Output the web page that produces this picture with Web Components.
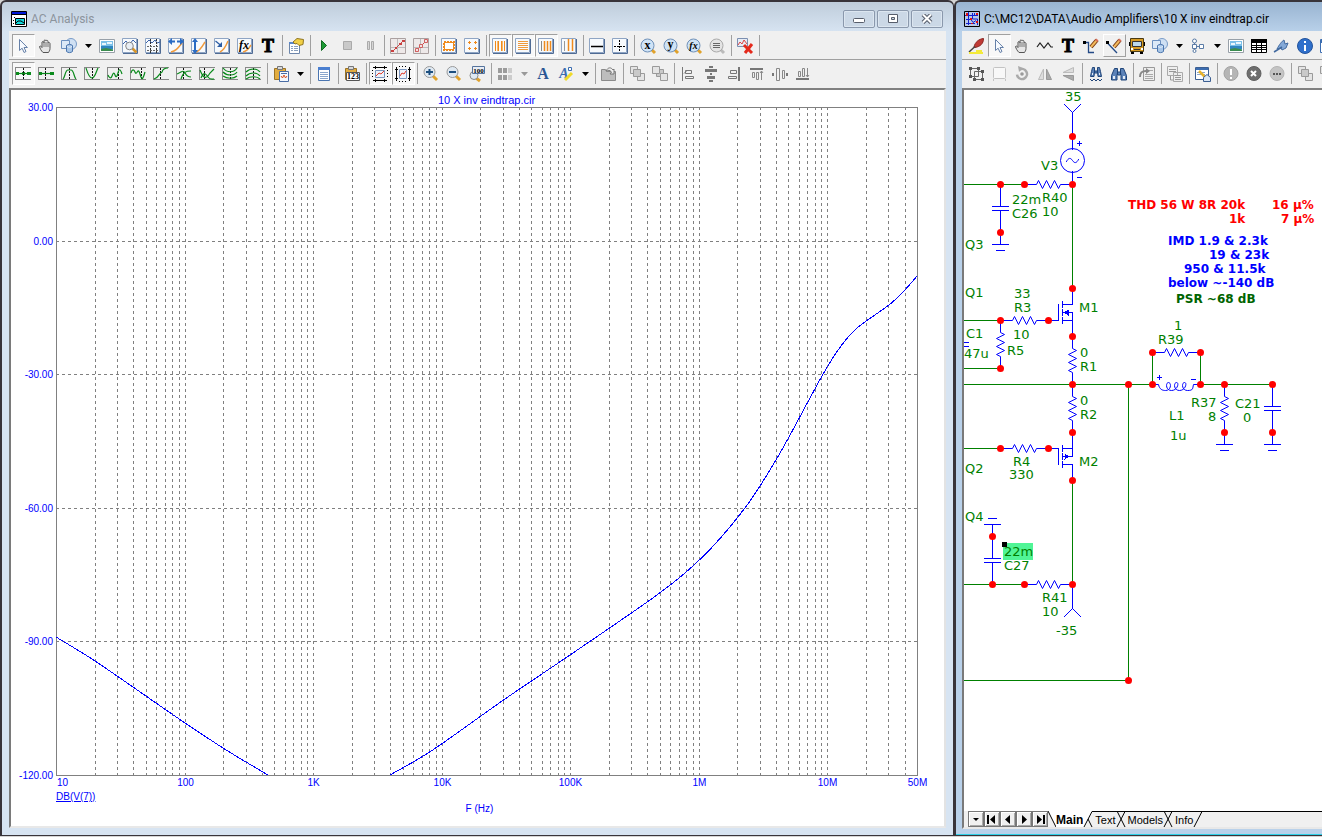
<!DOCTYPE html>
<html lang="en">
<head>
<meta charset="utf-8">
<title>Micro-Cap 12</title>
<style>
	body {
		margin: 0;
		height: 100vh;
		box-sizing: border-box;
		padding-bottom: 1px;
		display: grid;
		grid-template-columns: 954fr 368fr;
		grid-template-rows: minmax(0, 1fr);
		overflow: hidden;
		background: #d4d4d4;
		font-family: Roboto, "Open Sans", sans-serif;
	}
</style>
</head>
<body>
	<mc-window heading="AC Analysis" icon="analysis" inactive>
		<mc-toolbar slot="tools" label="Analysis" items="select* hand shapes v image zoomgraph graph autox autoy tofit fx text | props | run stop pause | lin sqr | orange dots | bars* rows* cols* cols2 | hline cross | magx magy magf magn | delete |"></mc-toolbar>
		<mc-toolbar slot="tools" label="Cursor" items="c0* c1 c2 c3 c4 c5 c6 c7 c8 c9 c10 | paste v | list | numeric | hscale* vscale* | zoomin zoomout zoom100 | tiles vd font color v | open | front back | al ac ar at am ab"></mc-toolbar>
		<mc-plot heading="10 X inv eindtrap.cir" trace="DB(V(7))" unit="F (Hz)"></mc-plot>
	</mc-window>
	<mc-window heading="C:\MC12\DATA\Audio Amplifiers\10 X inv eindtrap.cir" icon="circuit">
		<mc-toolbar slot="tools" label="Drawing" items="quill select* hand wave text ortho diag^ bus shapes v flow v image table link info window"></mc-toolbar>
		<mc-toolbar slot="tools" label="Editing" items="group box rotate flipx flipy | find2 find | redo | copyto | editpage | bang cross2 more | front back"></mc-toolbar>
		<mc-schematic></mc-schematic>
		<mc-tabs slot="footer">
			<button>Main</button>
			<button>Text</button>
			<button>Models</button>
			<button>Info</button>
		</mc-tabs>
	</mc-window>

<script>
/* ---------- icons, all on a 16 x 16 grid ---------- */

const page = '<path fill="#f7fafd" stroke="#8fa5c4" d="M.5 .5h14v14H.5z"/><path fill="none" stroke="#4f6b94" d="M15.500 1v14.500H1"/>';
const axes = '<path fill="none" stroke="#888" d="M.5 1v13M1 1.500h15M1 13.500h15"/>';
const mark = (x, y = 2) => `<path stroke="#111" stroke-dasharray="2 1" d="M${x} ${y}v11"/>`;
const curve = d => `<path fill="none" stroke="#0a8a1c" stroke-width="1.200" d="${d}"/>`;
const lens = (body, rim = '#6f90b8', fill = '#cfe3f6', handle = '#e0a22c') =>
	`<path stroke="${handle}" stroke-width="3" d="M11 11l4 4"/><circle cx="7.500" cy="7.500" r="6.500" fill="${fill}" stroke="${rim}"/>${body}`;
const glyph = (t, x, y, size, extra = '') =>
	`<text x="${x}" y="${y}" font-size="${size}" text-anchor="middle" font-family="Liberation Serif, serif" ${extra}>${t}</text>`;
const square = (x, y, s, a = '#e4e4e4', b = '#9a9a9a') => `<path fill="${a}" stroke="${b}" d="M${x}.5 ${y}.5h${s}v${s}h-${s}z"/>`;
const clip = '<path fill="#e2ac3e" stroke="#9a7327" d="M1.500 2.500h11v11h-11z"/><path fill="#d9d9d9" stroke="#777" d="M4.500 .5h5v3h-5z"/>';
const pencil = '<path stroke="#7b3b12" stroke-width="4" d="M8 9l6-7"/><path stroke="#f2b95c" stroke-width="2" d="M8 9l6-7"/><path stroke="#d8705c" stroke-width="3" d="M13 3l1.500-1.500"/>';

const ICONS = {
	analysis: '<path fill="#fff" stroke="#000" d="M.5 .5h15v15H.5z"/><path fill="#0018d8" d="M1 1h14v2H1z"/><path stroke="#000" d="M1 3.500h14"/><path fill="#12dbe0" stroke="#000" d="M4.500 7.500h9v6h-9z"/><path fill="none" stroke="#000" d="M5 12l2-2h3l3 2M3 6.500h1M2 9.500h1M2 12.500h1"/>',
	circuit: '<path fill="#b9c8e6" stroke="#000" d="M.5 .5h15v15H.5z"/><path fill="none" stroke="#1020d0" d="M1 4.500h13M4.500 1v13M8.500 2v6h5v6M2 8.500h5l2 3 3-2M10.500 2v3M2 12.500h9"/><path fill="#d11" d="M2 2h2v3H2zM12 2h2v2h-2zM6 7h2v2H6zM12 10h2v2h-2zM7 12h2v1H7z"/>',
	select: '<path fill="#f8fbff" stroke="#6580a8" d="M4.500 1.500v11l2.600-2.300 2 4.300 1.900-1-2-4h3.400z"/>',
	hand: '<path fill="#e6e6e6" stroke="#555" d="M5 14.500c-2-2-3-4-3.500-6 1-1 2 0 2.500 1V4c1-1 2 0 2 1V2.500c1-1 2 0 2 .5 0-1 2-1 2 .5v1.500c.5-1 2-.5 2 .5v5c0 2-1 3-1.500 4z"/><path stroke="#777" d="M6 5v4M8 4v5M10 5v4"/>',
	shapes: '<circle cx="10" cy="6" r="5.500" fill="#cfe0f3" stroke="#7a9cc8"/><path fill="#dce9f7" stroke="#6c90c0" d="M.5 2.500h8v8h-8z"/><path fill="#a9c7e8" stroke="#4d76ae" d="M5.500 7.500c2-1.500 4-1.500 6 0v6c-2 1.500-4 1.500-6 0z"/><path fill="none" stroke="#eef5fc" d="M6 8.500c2 1 3 1 5 0"/>',
	image: '<path fill="#fff" stroke="#98a0a8" d="M.5 1.500h15v13H.5z"/><path fill="#7cc0e8" d="M2 3h12v10H2z"/><path fill="#2f86c0" d="M2 8h12v3H2z"/><path fill="#3b8c4e" d="M2 11l5-1 7 1.500V13H2z"/><path fill="#e8f6fd" d="M3 5h4v2H3zM8 4h5v2H8z"/>',
	zoomgraph: page + '<path fill="none" stroke="#3b62a8" d="M1 6l3-3 3 4 4-5 3 3"/><path stroke="#d8962a" stroke-width="2.500" d="M10 10l4.500 4.500"/><circle cx="7.500" cy="8" r="3.800" fill="#e8eef5" stroke="#888"/>',
	graph: page + '<path fill="none" stroke="#3b62a8" d="M1 5l3-3 3 3 3-3 2 3 3-1"/><path stroke="#333" stroke-dasharray="2 1" d="M5.500 1v14M11.500 1v14"/><path stroke="#666" stroke-dasharray="2 1" d="M2 8.500h12M2 12.500h12"/>',
	autox: page + '<path fill="none" stroke="#f09a3c" stroke-width="1.500" d="M3 14c5-1 7-4 11-9"/><path fill="#2b6cc4" d="M0 3.500L4 0v2.500h3v2H4V7zM16 3.500L12 0v2.500H9v2h3V7z"/>',
	autoy: page + '<path fill="none" stroke="#f09a3c" stroke-width="1.500" d="M5 14c4-1 6-5 9-10"/><path fill="#2b6cc4" d="M4 0l3 4H5v8h2l-3 4-3-4h2V4H1z"/>',
	tofit: page + '<path fill="none" stroke="#f09a3c" stroke-width="1.500" d="M6 14c4-2 6-6 8-11"/><path stroke="#2b5ca4" stroke-width="1.300" d="M1.500 3L7 7.500"/><path fill="#2b5ca4" d="M8 4v5H3z"/>',
	fx: page + '<path fill="none" stroke="#f09a3c" stroke-width="1.500" d="M6 14c5-1 6-4 8-7"/>' + glyph('fx', 7, 11, 12, 'font-style="italic" font-weight="bold"'),
	text: glyph('T', 8, 14, 18, 'font-weight="bold" stroke="#000"'),
	props: '<path fill="#fff" stroke="#6d86ab" d="M1.500 5.500h10v10h-10z"/><path fill="#5a86c8" d="M1 4h11v2H1z"/><path stroke="#8aa0bd" d="M3 8.500h2M6 8.500h4M3 10.500h2M6 10.500h4M3 12.500h2M6 12.500h4"/><path fill="#f1cf45" stroke="#8f7420" d="M5 4l4-3.500 6.500 1-.5 5-4 1-2-2-2 .5z"/>',
	run: '<path fill="#1e9a35" stroke="#116a22" d="M5.500 2.500l5 5-5 5z"/>',
	stop: '<path fill="#c9c9c9" stroke="#aaa" d="M4.500 3.500h8v8h-8z"/>',
	pause: '<path fill="#d6d6d6" stroke="#aaa" d="M5.500 3.500h2v8h-2zM9.500 3.500h2v8h-2z"/>',
	lin: '<path fill="#eee9e9" stroke="#aaa0a0" d="M.5 .5h15v15H.5z"/><path stroke="#bbb" d="M7.500 1v14M1 9.500h14"/><path stroke="#c94848" d="M2 14L14 2"/><path fill="#c94040" d="M1 12h3v2H1zM5 9h2v2H5zM9 5h3v2H9zM12 2h3v2h-3z"/>',
	sqr: '<path fill="#eee9e9" stroke="#aaa0a0" d="M.5 .5h15v15H.5z"/><path stroke="#bbb" d="M7.500 1v14M1 9.500h14"/><path stroke="#c94848" d="M2 14L14 2"/><path fill="#f3e4e4" stroke="#d06060" d="M2.500 10.500h3v3h-3zM6.500 6.500h3v3h-3zM11.500 1.500h3v3h-3z"/>',
	orange: page + '<path fill="#fff" stroke="#ef8a1d" stroke-width="2" stroke-dasharray="2 1" d="M3 4h10v8H3z"/><path fill="none" stroke="#ef8a1d" d="M3.500 4.500h9v7h-9z"/>',
	dots: page + '<path stroke="#ef8a1d" d="M4 4.500h3M5.500 3v3M10 4.500h3M11.500 3v3M4 10.500h3M5.500 9v3M10 10.500h3M11.500 9v3"/>',
	bars: page + '<path stroke="#ef8a1d" d="M3.500 3v10M6.500 3v10M9.500 3v10M12.500 3v10"/><path stroke="#f6b76a" d="M5.500 3v10M10.500 3v10"/>',
	rows: page + '<path stroke="#ef9a3d" d="M3 3.500h10M3 5.500h10M3 7.500h10M3 9.500h10M3 11.500h10"/>',
	cols: page + '<path stroke="#888" d="M3.500 3v10"/><path stroke="#ef8a1d" stroke-width="1.500" d="M6.500 3v10M9.500 3v10M12.500 3v10"/>',
	cols2: page + '<path stroke="#999" d="M3.500 3v10"/><path stroke="#ef8a1d" stroke-width="1.500" d="M7.500 1v12M11.500 1v12"/>',
	hline: page + '<path stroke="#000" stroke-width="1.500" d="M2 8.500h12"/>',
	cross: page + '<path stroke="#000" stroke-dasharray="2 1" d="M7.500 2v12M2 8.500h12"/>',
	magx: lens(glyph('x', 7.5, 11, 12, 'font-weight="bold"')),
	magy: lens(glyph('y', 7.5, 10, 12, 'font-weight="bold"')),
	magf: lens(glyph('fx', 7.5, 11, 10, 'font-style="italic" font-weight="bold"')),
	magn: lens('<path stroke="#666" d="M4 5.500h7M4 7.500h7M4 9.500h7"/>', '#aaa', '#e4e4e4', '#bbb'),
	delete: '<path fill="#e6ecf5" stroke="#7c8fb0" d="M.5 .5h10v8H.5z"/><path fill="none" stroke="#d44" d="M1 7l2-3 2 2 2-4 3 4"/><path stroke="#e42a1c" stroke-width="3" d="M7 7l8 8M15 6l-7 9"/>',
	c0: axes + '<path fill="#0a8a1c" d="M1 6h3v3H1zM12 6h4v3h-4zM7 6h3v3H7z"/>' + curve('M3 7.500h10') + mark(8.5),
	c1: axes + '<path fill="#0a8a1c" d="M1 6h3v3H1zM12 6h4v3h-4z"/>' + curve('M3 7.500h10') + mark(7.5),
	c2: axes + mark(8.5) + curve('M2 13c2-1 2-9 5-9h3c3 0 3 8 5 9'),
	c3: axes + mark(8.5) + curve('M2 2c1 3 3 10 6 10s4-6 6-10'),
	c4: axes + mark(11.5) + curve('M1 9c1 3 3 4 4 1s2-4 3-1 2 2 3-2 2-5 4 1'),
	c5: axes + mark(11.5) + curve('M1 7c1-4 3-4 4-1s2 0 3-1 2 3 3 6 2 2 4-5'),
	c6: axes + mark(7.5) + curve('M1 13c5-1 4-5 8-7 1-4 4-4 6-4'),
	c7: axes + mark(7.5) + curve('M1 8c4-1 6-5 8-1s4 4 6 4M5 13c2-7 5-8 10-8'),
	c8: axes + mark(5.5) + curve('M1 4c3 8 6 10 10 3l4-4M2 12c3-7 5-4 7-1s4 2 6 2'),
	c9: axes + mark(8.5) + curve('M1 2c4 5 11 5 14 0M1 6c4 4 11 4 14 0M1 10c4 3 11 3 14 0'),
	c10: axes + mark(8.5) + curve('M1 6c4-4 11-4 14 0M1 10c4-4 11-4 14 0M1 13c4-3 11-3 14 0'),
	paste: clip + '<path fill="#f4f8fd" stroke="#4a6da5" d="M6.500 5.500h9v10h-9z"/><path fill="none" stroke="#d85020" d="M8 10l1.500 2 1.500-3 1.500 3 1.500-2"/><path stroke="#4a6da5" d="M8 7.500h6"/>',
	list: '<path fill="#fff" stroke="#4a75b0" d="M2.500 1.500h11v13h-11z"/><path fill="#4a7fd0" d="M2 1h12v3H2z"/><path stroke="#8aa6cc" d="M4 6.500h8M4 8.500h8M4 10.500h8M4 12.500h8"/>',
	numeric: clip + '<path fill="#fff" stroke="#555" d="M2.500 6.500h13v8h-13z"/>' + glyph('123', 9, 13, 8, 'font-weight="bold"'),
	hscale: '<path fill="#eef3fa" stroke="#7a96c0" d="M3.500 4.500h9v7h-9z"/><path fill="none" stroke="#e03a2a" d="M4 10l3-3 2 1 3-3"/><path stroke="#000" d="M1 1.500h14M1 14.500h14M3.500 0v3M12.500 0v3M3.500 13v3M12.500 13v3"/><path stroke="#000" stroke-dasharray="1 2" d="M.5 4v9M15.500 4v9"/>',
	vscale: '<path fill="#eef3fa" stroke="#7a96c0" d="M4.500 3.500h7v9h-7z"/><path fill="none" stroke="#e03a2a" d="M5 10l2-3 2 1 2-3"/><path stroke="#000" d="M1.500 1v14M14.500 1v14M0 3.500h3M0 12.500h3M13 3.500h3M13 12.500h3"/><path stroke="#000" stroke-dasharray="1 2" d="M4 .5h9M4 15.500h9"/>',
	zoomin: '<path stroke="#e0a22c" stroke-width="3" d="M10 10l4 4"/><circle cx="6.500" cy="6" r="5.500" fill="#dfe9f2" stroke="#999"/><path stroke="#1c4f80" stroke-width="2" d="M3 6h7M6.500 3v6"/>',
	zoomout: '<path stroke="#e0a22c" stroke-width="3" d="M10 10l4 4"/><circle cx="6.500" cy="6" r="5.500" fill="#dfe9f2" stroke="#999"/><path stroke="#1c4f80" stroke-width="2" d="M3 6h7"/>',
	zoom100: '<path stroke="#e0a22c" stroke-width="3" d="M7 12l4 3"/><circle cx="5" cy="9.500" r="4" fill="#dfe9f2" stroke="#888"/><path fill="#e9eef6" stroke="#55739c" d="M3.500 .5h12v7h-12z"/>' + glyph('100', 9.5, 7, 7, 'font-weight="bold"'),
	tiles: '<path fill="#9b9b9b" d="M1 2h4v5H1zM6 2h4v5H6zM1 9h4v5H1zM6 9h4v5H6z"/><path fill="#ccc" d="M11 2h4v5h-4zM11 9h4v5h-4z"/>',
	font: glyph('A', 8, 13, 16, 'font-weight="bold" fill="#2b5694"'),
	color: glyph('A', 6, 12, 14, 'font-weight="bold" font-style="italic" fill="#3c6db0"') + '<path stroke="#f0da28" stroke-width="3" d="M7 14l7-7"/><path fill="#fff" stroke="#3c6db0" d="M10.500 1.500h3v3h-3z"/>',
	open: '<path fill="#bdbdbd" stroke="#8a8a8a" d="M.5 3.500h4l1 2h9v9H.5z"/><path fill="#eee" stroke="#777" d="M5 5c2-4 5-4 7-1l1-1v5H9l1.500-2C9 4 7 4 5 5z"/>',
	front: square(1, 0, 7) + square(8, 7, 7) + square(4, 3, 7, '#c9c9c9'),
	back: square(4, 3, 7, '#c9c9c9') + square(0, 0, 7) + square(8, 7, 7),
	al: '<path fill="none" stroke="#777" d="M2.500 1v14M5.500 4.500h6v3h-6zM5.500 10.500h8v2h-8zM4 7.500l3-3"/>',
	ac: '<path fill="#777" d="M6 0h4v2H6zM2 3h12v3H2zM7 7h2v2H7zM4 10h8v3H4zM6 14h4v2H6z"/>',
	ar: '<path fill="none" stroke="#777" d="M4.500 4.500h6v3h-6zM2.500 10.500h8v2h-8z"/><path fill="#777" d="M12 1h2v14h-2z"/>',
	at: '<path fill="#777" d="M1 2h13v2H1z"/><path fill="none" stroke="#888" d="M3.500 6.500h2v5h-2zM7.500 6.500h2v7h-2zM12.500 5v9M11 7l1.500-2L14 7"/>',
	am: '<path fill="#777" d="M0 7h2v3H0zM14 7h2v3h-2z"/><path fill="none" stroke="#888" d="M4.500 2.500h3v12h-3zM10.500 4.500h2v8h-2z"/>',
	ab: '<path fill="#777" d="M1 12h13v2H1z"/><path fill="none" stroke="#888" d="M3.500 5.500h2v5h-2zM7.500 2.500h2v8h-2zM12.500 2v9M11 9l1.500 2 1.500-2"/>',
	quill: '<path fill="#c03a35" stroke="#8b2723" d="M6 9c1-5 5-8 9.500-8.500 0 5-3 8-8.500 9z"/><path stroke="#444" stroke-width="1.500" d="M1 14l6-5.500"/><path stroke="#f3ea3a" stroke-width="2" d="M1 15h14M8 13h6"/>',
	wave: '<path fill="none" stroke="#222" stroke-width="1.200" d="M0 9l3-4 4 5 4-5 3 4h2"/>',
	ortho: '<path fill="none" stroke="#234a86" stroke-width="1.300" d="M1 4.500h4.500v10H11"/>' + pencil + '<path d="M0 3h3v3H0z"/>',
	diag: '<path fill="none" stroke="#234a86" stroke-width="1.300" d="M1 4.500l10 10.500"/>' + pencil + '<path d="M0 3h3v3H0z"/>',
	bus: '<path fill="#d79b22" stroke="#4a3a14" d="M1.500 .5h13v13h-13z"/><path fill="#bcd8ea" stroke="#333" d="M3.500 3.500h9v5h-9z"/><path d="M0 4h1v4H0zM15 4h1v4h-1zM2 14h3v2H2zM11 14h3v2h-3z"/><path stroke="#333" d="M5 11.500h6"/><path fill="#fff" d="M2 10h2v2H2zM12 10h2v2h-2z"/>',
	flow: '<path fill="none" stroke="#5a7ba6" d="M4.500 4v8M5 8.500h4"/><circle cx="4.500" cy="3" r="2" fill="#fff" stroke="#5a7ba6"/><path fill="#fff" stroke="#5a7ba6" d="M2.500 6.500h4v4h-4zM9.500 6.500h4v4h-4z"/><circle cx="4.500" cy="13" r="1.500" fill="#fff" stroke="#5a7ba6"/>',
	table: '<path fill="#fff" stroke="#000" d="M.5 1.500h15v13H.5z"/><path d="M0 1h16v4H0z"/><path fill="none" stroke="#000" d="M1 7.500h14M1 9.500h14M1 11.500h14M5.500 5v9M10.500 5v9"/>',
	link: '<path fill="#84a9d8" stroke="#41699f" d="M3 11c2-4 5-8 7-9l1 4 3-1-2 5-4 2-1-2z"/><path stroke="#41699f" stroke-width="1.500" d="M0 14l8-5"/>',
	info: '<circle cx="8" cy="8" r="7.500" fill="#2f6fcb" stroke="#24549c"/><path fill="#fff" d="M7 3h2v2H7zM7 7h2v6H7z"/>',
	window: '<path fill="#fff" stroke="#3c6db0" d="M.5 1.500h15v13H.5z"/><path fill="#3c6db0" d="M1 2h14v3H1z"/>',
	group: '<path fill="none" stroke="#666" d="M2.500 2.500h8v8h-8zM6.500 5.500h8v8h-8z"/><path fill="#555" d="M1 1h3v3H1zM9 1h3v3H9zM1 9h3v3H1zM5 12h3v3H5zM13 12h3v3h-3zM13 4h3v3h-3z"/>',
	box: '<rect x="2.500" y="1.500" width="12" height="11" rx="1" fill="#f8f8f8" stroke="#c3c3c3"/><path stroke="#c3c3c3" d="M2.500 13v2M14.500 13v2"/>',
	rotate: '<circle cx="8" cy="8" r="5" fill="none" stroke="#aaa" stroke-width="2.500" stroke-dasharray="25 6" transform="rotate(-120 8 8)"/><path fill="#aaa" d="M4 0l1 6 4-4z"/><circle cx="8" cy="8" r="1.800" fill="#999"/>',
	flipx: '<path fill="#ddd" stroke="#bbb" d="M1.500 13.500h5V3z"/><path fill="#aaa" stroke="#999" d="M9.500 3v10.500h5z"/>',
	flipy: '<path fill="#ddd" stroke="#bbb" d="M13.500 1.500v5H3z"/><path fill="#aaa" stroke="#999" d="M13.500 14.500v-5H3z"/>',
	find2: '<path fill="#5b82b8" stroke="#1f4478" d="M4.500 1.500h2v4l-.5 5H2.500l1-5zM9.500 1.500h2l1 4 1 5H10l-.5-5zM6.500 5h3v2h-3z"/><path fill="#e4ecf6" d="M4 7h1v2H4zM11 7h1v2h-1z"/><path fill="none" stroke="#1f4478" d="M2 13l2 2 2-2 2 2 2-2 2 2 2-2"/>',
	find: '<path fill="#5b82b8" stroke="#1f4478" d="M3.500 2.500h3v4l-.5 3v4.500H.5V9.500zM9.500 2.500h3l3 7v4.500H10V9.500l-.5-3zM6.500 6h3v3h-3z"/><path fill="#e4ecf6" d="M2 10h2v3H2zM12 10h2v3h-2z"/>',
	redo: '<path fill="#eee" stroke="#999" d="M4.500 1.500h11v13h-11z"/><path stroke="#aaa" d="M6 8.500h8M6 10.500h8M6 12.500h8M9 4.500h5"/><path fill="none" stroke="#888" stroke-width="2" d="M1 11c0-5 2-6 6-6"/><path fill="#888" d="M7 2l4 3-4 3z"/>',
	copyto: '<path fill="#eee" stroke="#aaa" d="M.5 .5h10v9H.5zM6.500 6.500h9v9h-9z"/><path fill="none" stroke="#999" d="M2 3.500h7M2 5.500h7M8 9.500h6M8 11.500h6M8 13.500h6M3.500 10v4H6"/>',
	editpage: '<path fill="#fff" stroke="#3c5f92" d="M.5 1.500h13v12H.5z"/><path fill="#3c6db0" d="M1 2h12v2H1z"/><path stroke="#8aa6cc" d="M2 6.500h8M2 8.500h8"/><path stroke="#e8b32c" stroke-width="2.500" d="M4 5l6 6"/><path fill="#dce7f4" stroke="#3c5f92" d="M8.500 15.500v-4l3.500-3 3.500 3v4z"/>',
	bang: '<circle cx="8" cy="7.500" r="7" fill="#b5b5b5" stroke="#a2a2a2"/><path fill="#fff" d="M7 3h2v6H7zM7 11h2v2H7z"/>',
	cross2: '<circle cx="8" cy="7.500" r="7" fill="#6e6e6e" stroke="#606060"/><path stroke="#fff" stroke-width="2" d="M5 5l5 5M10 5l-5 5"/>',
	more: '<circle cx="8" cy="7.500" r="7" fill="#c4c4c4" stroke="#b4b4b4"/><path fill="#555" d="M4 7h2v2H4zM7 7h2v2H7zM10 7h2v2h-2z"/>',
};

const svgIcon = name => `<svg width="16" height="16" viewBox="0 0 16 16" aria-hidden="true">${ICONS[name]}</svg>`;

/**
 * A single tool button.
 * @attribute icon     key of ICONS
 * @attribute pressed  sunken look
 * @attribute raised   raised look
 */
class McTool extends HTMLElement {
	constructor() {
		super();
		this.attachShadow({mode: 'open'});
	}

	connectedCallback() {
		this.shadowRoot.innerHTML = `
			<style>
			:host {
				display: block;
				flex: none;
			}

			button {
				box-sizing: border-box;
				display: block;
				width: 23px;
				height: 23px;
				padding: 2px;
				border: 1px solid transparent;
				background: none;
			}

			:host([pressed]) button {
				background: #f8f8f8;
				border-color: #a0a0a0 #fff #fff #a0a0a0;
			}

			:host([raised]) button {
				border-color: #fff #a0a0a0 #a0a0a0 #fff;
			}

			svg { display: block; overflow: visible; }
			</style>
			<button type="button" aria-label="${this.getAttribute('icon')}" aria-pressed="${this.hasAttribute('pressed')}">${svgIcon(this.getAttribute('icon'))}</button>
		`;
	}
}

/**
 * One row of tools.
 * @attribute items  names separated by blanks; "*" pressed, "^" raised,
 *                   "|" separator, "v" menu arrow, "vd" disabled menu arrow
 */
class McToolbar extends HTMLElement {
	constructor() {
		super();
		this.attachShadow({mode: 'open'});
	}

	connectedCallback() {
		const items = this.getAttribute('items').split(' ').map(item => this.item(item)).join('');
		this.shadowRoot.innerHTML = `
			<style>
			:host {
				display: flex;
				padding: 2px 3px;
				overflow: hidden;
			}

			i {
				flex: none;
				width: 1px;
				margin: 1px 2px;
				background: #a0a0a0;
			}

			.menu {
				flex: none;
				width: 15px;
				padding: 0;
				border: 0;
				background: none;
			}

			.menu svg { display: block; margin: auto; }
			</style>
			${items}
		`;
		this.setAttribute('role', 'toolbar');
		this.setAttribute('aria-label', this.getAttribute('label'));
	}

	item(text) {
		if (text === '|') return '<i></i>';
		if (text === 'v' || text === 'vd') {
			const fill = text === 'v' ? '#000' : '#999';
			return `<button class="menu" type="button" aria-label="menu"><svg width="7" height="4"><path fill="${fill}" d="M0 0h7L3.500 4z"/></svg></button>`;
		}
		const state = text.endsWith('*') ? 'pressed' : text.endsWith('^') ? 'raised' : '';
		return `<mc-tool icon="${text.replace(/[*^]/, '')}" ${state}></mc-tool>`;
	}
}

/**
 * MDI child window with title bar, tools, body and footer.
 * @attribute inactive  greyed title and visible caption buttons
 */
class McWindow extends HTMLElement {
	constructor() {
		super();
		this.attachShadow({mode: 'open'});
	}

	connectedCallback() {
		const caption = `
			<nav>
				<button aria-label="Minimize"><svg width="14" height="10"><rect x="1.500" y="4.500" width="11" height="4" rx="1" fill="#fff" stroke="#565d6b"/></svg></button>
				<button aria-label="Restore"><svg width="14" height="10"><path fill="#fff" stroke="#565d6b" d="M2.500 .5h9v8h-9z"/><path fill="#cbd6e2" stroke="#565d6b" d="M5.500 3.500h3v2h-3z"/></svg></button>
				<button aria-label="Close"><svg width="14" height="10"><path stroke="#565d6b" stroke-width="4" d="M3 .5l8 8M11 .5l-8 8"/><path stroke="#fff" stroke-width="2" d="M3 .5l8 8M11 .5l-8 8"/></svg></button>
			</nav>`;
		this.shadowRoot.innerHTML = `
			<style>
			:host {
				--frame: #b9d1ea;
				display: flex;
				flex-direction: column;
				box-sizing: border-box;
				min-width: 0;
				border: 2px solid #38343a;
				border-width: 2px 0 1px 2px;
				border-radius: 6px 0 0 0;
				padding: 0 0 6px 6px;
				background: linear-gradient(#99b4d1, var(--frame) 30px);
				box-shadow: inset 0 -1px #2fd0e6;
			}

			:host([inactive]) {
				--frame: #d7e4f2;
				border-width: 2px 1px 1px 2px;
				border-radius: 6px 6px 0 0;
				padding: 0 7px 7px 7px;
				background: linear-gradient(#bfcddb, var(--frame) 30px);
				box-shadow: none;
			}

			header {
				display: flex;
				align-items: center;
				gap: 4px;
				box-sizing: border-box;
				height: 29px;
				padding: 5px 3px 0 2px;
			}

			h1 {
				flex: 1;
				margin: 0;
				font-size: 12px;
				line-height: 18px;
				font-weight: normal;
				white-space: nowrap;
				overflow: hidden;
			}

			:host([inactive]) h1 { color: #8c949d; }

			nav {
				display: flex;
				gap: 2px;
			}

			nav button {
				display: grid;
				place-items: center;
				width: 32px;
				height: 18px;
				padding: 0;
				border: 1px solid #8a98ac;
				border-radius: 2px;
				background: #cbd8e6;
				box-shadow: inset 0 0 0 1px #dce6f0;
			}

			.tools {
				padding-top: 1px;
				background: #f0f0f0;
			}

			::slotted(mc-toolbar:first-of-type) { border-bottom: 1px solid #a0a0a0; }
			::slotted(mc-toolbar:nth-of-type(2)) { padding-bottom: 3px; }

			main {
				flex: 1;
				min-height: 0;
				display: flex;
				flex-direction: column;
				border: 2px solid #696969;
				border-color: #808080 #e3e3e3 #e8e8e8 #7a7a7a;
				background: #fff;
			}

			:host(:not([inactive])) main { border-right: 0; }
			</style>
			<header>${svgIcon(this.getAttribute('icon'))}<h1></h1>${this.hasAttribute('inactive') ? caption : ''}</header>
			<div class="tools"><slot name="tools"></slot></div>
			<main><slot></slot><slot name="footer"></slot></main>
		`;
		this.shadowRoot.querySelector('h1').textContent = this.getAttribute('heading');
	}
}

/**
 * Bode plot on a logarithmic frequency axis.
 * Redrawn whenever the element changes size.
 */
class McPlot extends HTMLElement {
	margin = {top: 17, right: 27, bottom: 51, left: 45};
	ticks = [[10, '10'], [100, '100'], [1e3, '1K'], [1e4, '10K'], [1e5, '100K'], [1e6, '1M'], [1e7, '10M'], [5e7, '50M']];
	levels = [30, 0, -30, -60, -90, -120];
	// trace samples, on a field of 861 x 668
	samples = [
		[[0, 530], [39, 554], [100, 596], [129, 616], [167, 641], [190, 655], [212, 668]],
		[[334, 668], [364, 651], [387, 636], [449, 592], [514, 548], [594, 493], [629, 466], [660, 436], [694, 394], [724, 346], [754, 291], [770, 262], [785, 239], [801, 221], [833, 198], [848, 184], [861, 169]]
	];

	constructor() {
		super();
		this.attachShadow({mode: 'open'});
		this.shadowRoot.innerHTML = `
			<style>
			:host {
				display: block;
				flex: 1;
				min-height: 0;
				overflow: hidden;
			}

			svg { display: block; }
			text { font: 10px "Liberation Sans", Arial, sans-serif; fill: #00f; }
			.heading { font-size: 11px; }
			.trace { text-decoration: underline; }
			.grid { stroke: #808080; stroke-dasharray: 3 3; shape-rendering: crispEdges; }
			.frame { fill: none; stroke: #808080; shape-rendering: crispEdges; }
			.curve { fill: none; stroke: #00f; vector-effect: non-scaling-stroke; shape-rendering: crispEdges; }
			</style>
			<svg></svg>
		`;
	}

	connectedCallback() {
		this.draw();
		new ResizeObserver(() => this.draw()).observe(this);
	}

	draw() {
		const m = this.margin;
		const width = this.clientWidth;
		const height = this.clientHeight;
		const w = width - m.left - m.right;
		const h = height - m.top - m.bottom;
		if (w < 1 || h < 1) return;

		const px = f => Math.round(m.left + w * Math.log10(f / 10) / Math.log10(5e6)) + .5;
		const py = db => Math.round(m.top + h * (30 - db) / 150) + .5;
		const bottom = m.top + h;
		let out = '';

		for (let decade = 10; decade < 5e7; decade *= 10) {
			for (let n = 1; n < 10; n++) {
				const f = decade * n;
				if (f > 10 && f < 5e7) out += `<path class="grid" d="M${px(f)} ${m.top}V${bottom}"/>`;
			}
		}
		for (const db of this.levels) {
			if (db < 30 && db > -120) out += `<path class="grid" d="M${m.left} ${py(db)}H${m.left + w}"/>`;
			out += `<text x="${m.left - 3}" y="${py(db) + 3.5}" text-anchor="end">${db.toFixed(2)}</text>`;
		}
		out += `<path class="frame" d="M${px(10)} ${py(30)}H${px(5e7)}V${py(-120)}H${px(10)}z"/>`;
		for (const [f, label] of this.ticks) {
			const x = f === 10 ? px(f) + 6 : px(f);
			out += `<text x="${x}" y="${bottom + 11}" text-anchor="middle">${label}</text>`;
		}
		out += `<svg x="${m.left}" y="${m.top}" width="${w}" height="${h}" viewBox="0 0 861 668" preserveAspectRatio="none">
			${this.samples.map(points => `<path class="curve" d="${this.smooth(points)}"/>`).join('')}
		</svg>`;
		out += `<text class="heading" x="${m.left + w / 2}" y="${m.top - 3}" text-anchor="middle">${this.getAttribute('heading')}</text>`;
		out += `<text class="trace" x="${m.left}" y="${bottom + 25}">${this.getAttribute('trace')}</text>`;
		out += `<text x="${m.left + w / 2 - 7}" y="${bottom + 37}" text-anchor="middle">${this.getAttribute('unit')}</text>`;

		const svg = this.shadowRoot.querySelector('svg');
		svg.setAttribute('width', width);
		svg.setAttribute('height', height);
		svg.innerHTML = out;
	}

	// Catmull-Rom spline through the points
	smooth(p) {
		let d = `M${p[0]}`;
		for (let i = 0; i < p.length - 1; i++) {
			const a = p[i - 1] || p[i];
			const b = p[i];
			const c = p[i + 1];
			const e = p[i + 2] || c;
			d += `C${b[0] + (c[0] - a[0]) / 6} ${b[1] + (c[1] - a[1]) / 6} ${c[0] - (e[0] - b[0]) / 6} ${c[1] - (e[1] - b[1]) / 6} ${c}`;
		}
		return d;
	}
}

/**
 * Circuit sheet. Parts sit on an 8 px grid; the sheet is scrolled by `origin`.
 */
class McSchematic extends HTMLElement {
	origin = [964, 90];
	wires = [
		'M960 184h64', 'M1072 184v104', 'M960 320h40', 'M960 368h40', 'M960 384h192', 'M960 448h40',
		'M1072 480v104', 'M960 584h64', 'M960 680h168V384', 'M1152 384v-32', 'M1200 384v-32', 'M1200 384h72'
	];
	joints = [
		[1072, 136], [1072, 184], [1000, 184], [1024, 184], [1000, 232], [1072, 288], [1000, 320], [1048, 320],
		[1072, 336], [1000, 368], [1072, 384], [1128, 384], [1152, 384], [1200, 384], [1224, 384], [1272, 384],
		[1152, 352], [1200, 352], [1224, 432], [1272, 432], [1072, 432], [1000, 448], [1048, 448], [1072, 480],
		[992, 536], [992, 584], [1024, 584], [1072, 584], [1128, 680]
	];
	// x, y, rotation
	resistors = [
		[1024, 184, 0], [1000, 320, 0], [1000, 448, 0], [1024, 584, 0], [1152, 352, 0],
		[1000, 320, 90], [1072, 336, 90], [1072, 384, 90], [1224, 384, 90]
	];
	labels = [
		[1065, 101, '35'], [1041, 170, 'V3'], [1012, 204, '22m'], [1012, 218, 'C26'], [1042, 202, 'R40'], [1042, 216, '10'],
		[965, 249, 'Q3'], [965, 297, 'Q1'], [1014, 298, '33'], [1014, 312, 'R3'], [1013, 339, '10'], [1007, 355, 'R5'],
		[966, 338, 'C1'], [964, 358, '47u'], [1079, 312, 'M1'], [1080, 357, '0'], [1080, 371, 'R1'], [1080, 405, '0'],
		[1080, 419, 'R2'], [1013, 466, 'R4'], [1009, 479, '330'], [965, 473, 'Q2'], [1079, 466, 'M2'], [965, 521, 'Q4'],
		[1004, 556, '22m'], [1004, 570, 'C27'], [1042, 602, 'R41'], [1042, 616, '10'], [1056, 635, '-35'],
		[1174, 330, '1'], [1158, 344, 'R39'], [1191, 407, 'R37'], [1208, 421, '8'], [1235, 408, 'C21'], [1243, 422, '0'],
		[1169, 420, 'L1'], [1170, 440, '1u']
	];
	notes = [
		[1128, 209, 'THD 56 W 8R 20k', '#f00'], [1272, 209, '16 µ%', '#f00'], [1229, 223, '1k', '#f00'], [1281, 223, '7 µ%', '#f00'],
		[1168, 245, 'IMD 1.9 &amp; 2.3k', '#00f'], [1209, 259, '19 &amp; 23k', '#00f'], [1184, 273, '950 &amp; 11.5k', '#00f'],
		[1168, 287, 'below ~-140 dB', '#00f'], [1176, 303, 'PSR ~68 dB', '#006400']
	];

	constructor() {
		super();
		this.attachShadow({mode: 'open'});
	}

	connectedCallback() {
		const at = (list, draw) => list.map(draw).join('');
		const [ox, oy] = this.origin;
		this.shadowRoot.innerHTML = `
			<style>
			:host {
				display: block;
				flex: 1;
				min-height: 0;
				overflow: hidden;
			}

			svg { display: block; width: 100%; height: 100%; }
			path, circle { fill: none; stroke: #00f; }
			path { stroke-linecap: square; shape-rendering: crispEdges; }
			.wire { stroke: #008000; }
			.joint { fill: #f00; stroke: none; }
			.solid { fill: #00f; stroke: none; }
			.round { shape-rendering: auto; }
			text { font: 13px "DejaVu Sans", Verdana, sans-serif; fill: #008000; }
			.note { font-size: 12px; font-weight: bold; }
			</style>
			<svg>
				<g transform="translate(${-ox} ${-oy})">
					<rect x="1003" y="543" width="30" height="17" fill="#50f596"/>
					<g transform="translate(.5 .5)">
						${at(this.wires, d => `<path class="wire" d="${d}"/>`)}
						${at(this.resistors, ([x, y, r]) => `<path class="round" transform="translate(${x} ${y}) rotate(${r})" d="M0 0h12l2-4 4 8 4-8 4 8 4-8 4 8 2-4h12"/>`)}
						<path d="M1064 104l8 8 8-8M1072 112v37M1072 171v13M1077 143h4M1079 141v4M1077 177h4"/>
						<circle cx="1072" cy="160" r="12"/>
						<path class="round" d="M1066 161c2-4 4-4 6-1s4 3 6-1"/>
						<path d="M1000 184v22M992 206h16M992 210h16M1000 210v34M992 244h16M996 250h8"/>
						<path d="M960 342h8M960 346h8"/>
						${this.mosfet(320, -1)}
						${this.mosfet(448, 1)}
						<path d="M984 524h16M988 518h8M992 524v34M984 558h16M984 562h16M992 562v22"/>
						<path d="M1072 584v24M1064 616l8-8 8 8"/>
						<path class="round" d="M1152 384h6c1 5 4 6 7 6 6 0 6-8 3-8s-3 8 3 8 8-8 5-8-3 8 3 8 8-8 5-8-3 8 3 8 5-2 6-6h7"/>
						<path d="M1157 377h4M1159 375v4M1191 379h4"/>
						<path d="M1224 432v12M1216 444h16M1220 450h8"/>
						<path d="M1272 384v22M1264 406h16M1264 410h16M1272 410v34M1264 444h16M1268 450h8"/>
						${at(this.joints, ([x, y]) => `<circle class="joint" cx="${x}" cy="${y}" r="3.500"/>`)}
					</g>
					<rect x="1002" y="542" width="5" height="5"/>
					${at(this.labels, ([x, y, t]) => `<text x="${x}" y="${y}">${t}</text>`)}
					${at(this.notes, ([x, y, t, fill]) => `<text class="note" x="${x}" y="${y}" style="fill: ${fill}">${t}</text>`)}
				</g>
			</svg>
		`;
	}

	// gate enters at height y; dir -1 has the drain on top, 1 the source on top
	mosfet(y, dir) {
		const gap = 8 * dir;
		const arrow = dir < 0 ? 'M1063 0l5-3v6z' : 'M1069 0l-5-3v6z';
		return `
			<g transform="translate(0 ${y})">
				<path d="M1048 0h10M1058 ${2 * gap}V0M1062 0h10M1062 ${gap}h10M1062 ${2 * gap}h10"/>
				<path d="M1062 -3v6M1062 ${gap - 3}v6M1062 ${2 * gap - 3}v6"/>
				<path d="${dir < 0 ? 'M1072 -16V-32M1072 -8V16' : 'M1072 16V32M1072 8V-16'}"/>
				<path class="solid" transform="translate(0 ${gap})" d="${arrow}"/>
			</g>`;
	}
}

/**
 * Sheet tabs with scroll buttons. Slotted buttons are the tabs, the first is current.
 */
class McTabs extends HTMLElement {
	constructor() {
		super();
		this.attachShadow({mode: 'open'});
	}

	connectedCallback() {
		const arrows = {
			Sheets: 'M4 6h6l-3 3z',
			First: 'M2 3h2v9H2zM10 3v9L5 7.500z',
			Previous: 'M9 3v9L4 7.500z',
			Next: 'M5 3v9l5-4.500z',
			Last: 'M4 3v9l5-4.500zM10 3h2v9h-2z'
		};
		const tabs = [...this.children];
		tabs.forEach((tab, i) => tab.slot = `tab${i}`);
		const edge = i => {
			if (i === 0) return '<path fill="#fff" d="M0 0l8 16V0z"/><path d="M0 0l8 16"/>';
			if (i === 1) return '<path fill="#fff" d="M0 0h9L2 16H0z"/><path d="M9 .5L1 16M5 8l4 8M9 .5h3"/>';
			if (i === tabs.length) return '<path d="M0 .5h12M9 .5L1 16"/>';
			return '<path d="M0 .5h12M1 0l8 16M9 .5L1 16"/>';
		};
		const slant = i => `<svg class="edge" width="${i ? 12 : 8}" height="16" aria-hidden="true">${edge(i)}</svg>`;
		this.shadowRoot.innerHTML = `
			<style>
			:host {
				display: flex;
				height: 16px;
				padding-left: 4px;
				background: #f0f0f0;
				overflow: hidden;
			}

			.nav {
				flex: none;
				box-sizing: border-box;
				width: 16px;
				height: 16px;
				padding: 0;
				border: 1px solid #777;
				box-shadow: inset 1px 1px #fff, inset -1px -1px #aaa;
				background: #f0f0f0;
			}

			.nav svg { display: block; }
			.edge { flex: none; fill: none; stroke: #000; }
			.edge path[fill] { stroke: none; }

			::slotted(button) {
				flex: none;
				padding: 0;
				border: 0;
				border-top: 1px solid #000;
				background: none;
				font: 11px/14px "Liberation Sans", Arial, sans-serif;
				color: #000;
			}

			::slotted(button:first-child) {
				border-color: #fff;
				background: #fff;
				font-size: 12px;
				font-weight: bold;
			}

			.rest {
				flex: 1;
				border-top: 1px solid #000;
			}
			</style>
			${Object.entries(arrows).map(([name, d]) => `<button class="nav" aria-label="${name}"><svg width="14" height="14"><path d="${d}"/></svg></button>`).join('')}
			${tabs.map((tab, i) => slant(i) + `<slot name="tab${i}"></slot>`).join('')}
			${slant(tabs.length)}
			<span class="rest"></span>
		`;
	}
}

customElements.define('mc-tool', McTool);
customElements.define('mc-toolbar', McToolbar);
customElements.define('mc-window', McWindow);
customElements.define('mc-plot', McPlot);
customElements.define('mc-schematic', McSchematic);
customElements.define('mc-tabs', McTabs);
</script>
</body>
</html>
